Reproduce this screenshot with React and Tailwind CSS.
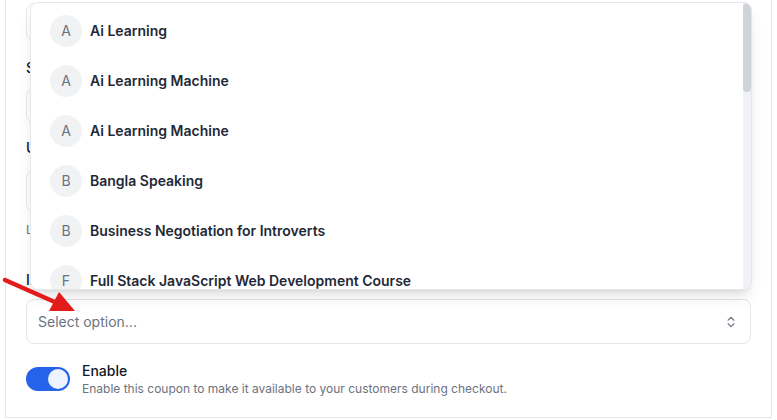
import React from "react";
import { ChevronsUpDown } from "lucide-react";

const courses = [
    "Ai Learning",
    "Ai Learning Machine",
    "Ai Learning Machine",
    "Bangla Speaking",
    "Business Negotiation for Introverts",
    "Full Stack JavaScript Web Development Course",
];

function CourseRow({ name }) {
    return (
        <div className="flex items-center gap-2 h-[50px] px-[19px] shrink-0">
            <div className="w-8 h-8 rounded-full bg-[#f1f2f4] flex items-center justify-center text-sm text-[#6b7280]">
                {name[0]}
            </div>
            <span className="text-sm font-semibold text-[#1f2937] truncate">{name}</span>
        </div>
    );
}

export default function App() {
    return (
        <div className="bg-white w-[777px] h-[420px] overflow-hidden px-[5px] font-['Inter',_'Liberation_Sans',_sans-serif]">
            <div className="border-x border-b border-[#e5e7eb] px-5 pt-[3px] h-[418px] relative">
                {/* fields behind the open menu */}
                <div className="h-[38px] rounded-lg border border-[#e5e7eb]" />
                <label className="block mt-[19px] text-sm font-medium text-[#111827] leading-4">Start date</label>
                <div className="mt-[12px] h-[35px] rounded-lg border border-[#e5e7eb]" />
                <label className="block mt-[17px] text-sm font-medium text-[#111827] leading-4">Usage limit</label>
                <div className="mt-[14px] h-[42px] rounded-lg border border-[#e5e7eb]" />
                <p className="mt-[10px] text-xs text-[#6b7280] leading-4">Leave empty for unlimited usage</p>
                <label className="block mt-[34px] text-sm font-medium text-[#111827] leading-4">Included courses</label>

                <div className="relative mt-[11px]">
                    <button className="w-full h-[45px] rounded-lg border border-[#e5e7eb] bg-white flex items-center justify-between pl-[11px] pr-[12px]">
                        <span className="text-sm text-[#6b7280]">Select option...</span>
                        <ChevronsUpDown size={14} strokeWidth={2} className="text-[#6b7280]" />
                    </button>

                    <div className="absolute left-[4px] right-[-1px] bottom-[calc(100%+9px)] h-[288px] bg-white border border-[#e5e7eb] rounded-lg shadow-lg overflow-hidden">
                        <div className="h-full overflow-hidden pt-[3px] pr-2 flex flex-col">
                            {courses.map((c, i) => (
                                <CourseRow key={i} name={c} />
                            ))}
                        </div>
                        {/* scrollbar */}
                        <div className="absolute top-0 right-0 bottom-0 w-2 bg-[#f1f2f5]">
                            <div className="h-[89px] rounded-full bg-[#cfd3da]" />
                        </div>
                    </div>
                </div>

                <div className="flex items-start gap-3 mt-[17px]">
                    <button className="mt-[6px] w-11 h-6 rounded-full bg-[#2563eb] flex items-center justify-end px-[2px] shrink-0">
                        <span className="w-5 h-5 rounded-full bg-[#eef4ff]" />
                    </button>
                    <div>
                        <p className="text-sm font-medium text-[#111827] leading-5">Enable</p>
                        <p className="text-xs text-[#6b7280] leading-4">
                            Enable this coupon to make it available to your customers during checkout.
                        </p>
                    </div>
                </div>

                {/* annotation arrow */}
                <svg className="absolute left-[-6px] top-[274px] pointer-events-none" width="80" height="45" viewBox="0 0 80 45">
                    <line x1="5" y1="6" x2="57" y2="29" stroke="#e21b1b" strokeWidth="4.5" strokeLinecap="round" />
                    <polygon points="75,37 49,37 59,18" fill="#e21b1b" />
                </svg>
            </div>
        </div>
    );
}
